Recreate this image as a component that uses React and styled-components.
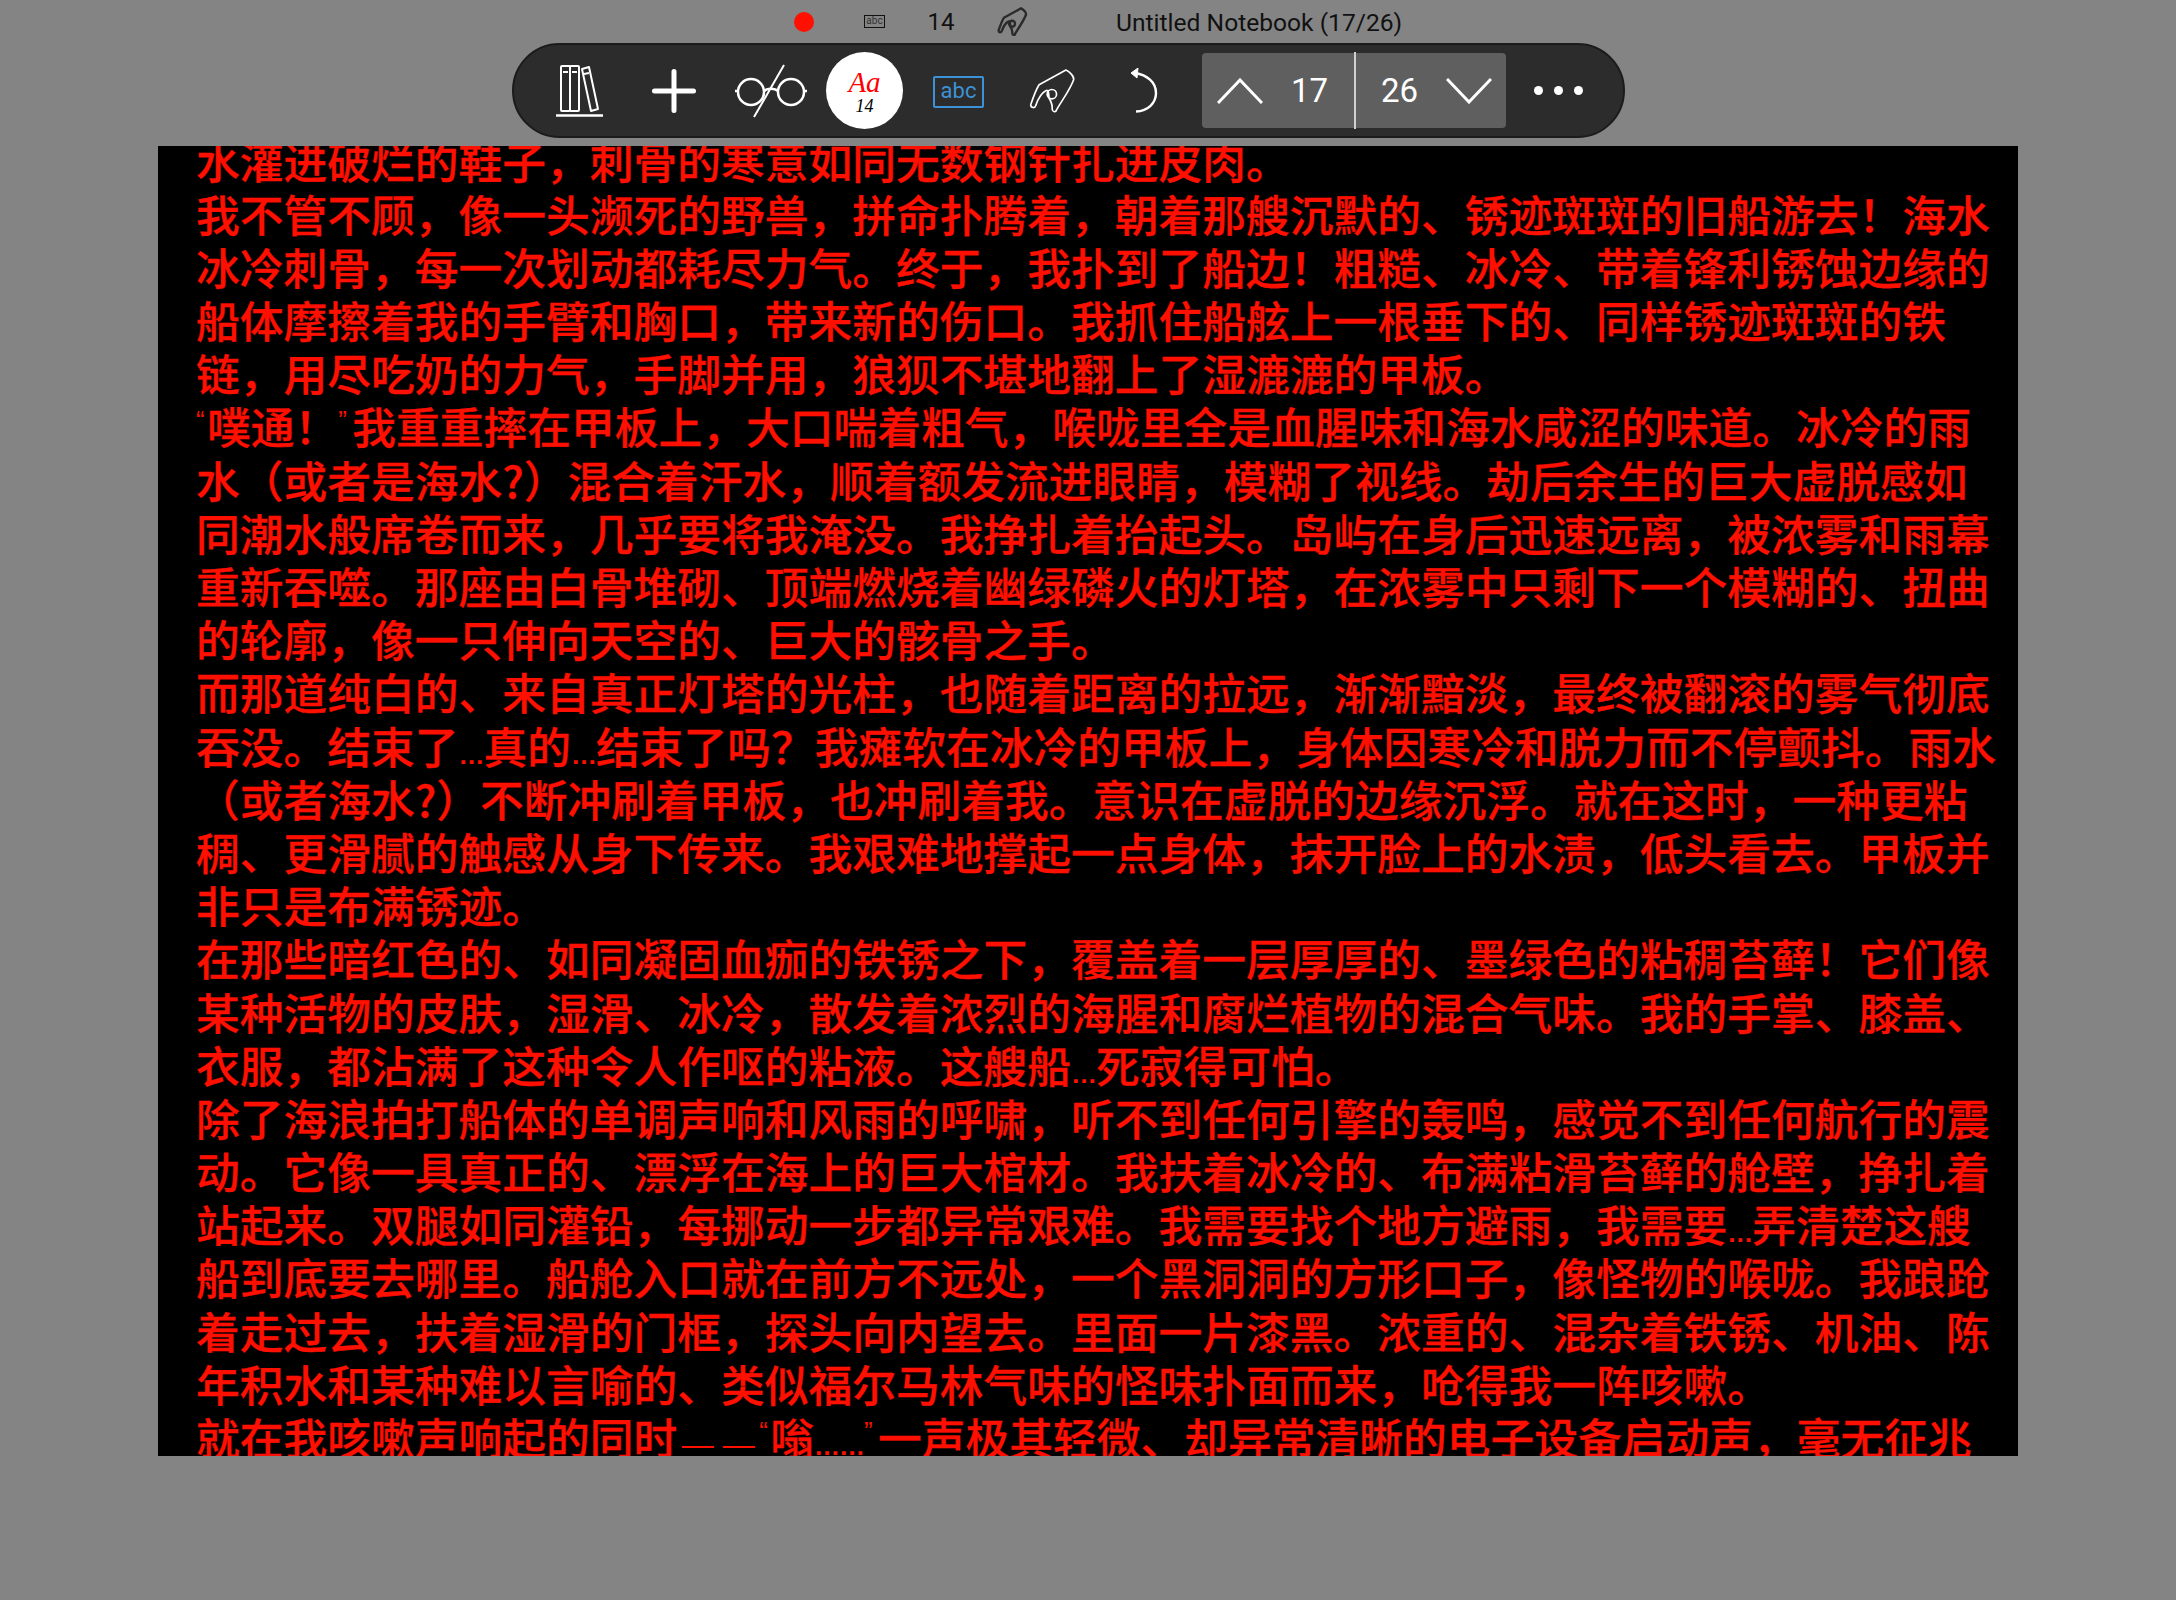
import styled, { createGlobalStyle } from "styled-components";

const GlobalStyle = createGlobalStyle`
  html, body {
    margin: 0;
    background: #848484;
  }
`;

const lines = [
  "水灌进破烂的鞋子，刺骨的寒意如同无数钢针扎进皮肉。",
  "我不管不顾，像一头濒死的野兽，拼命扑腾着，朝着那艘沉默的、锈迹斑斑的旧船游去！海水",
  "冰冷刺骨，每一次划动都耗尽力气。终于，我扑到了船边！粗糙、冰冷、带着锋利锈蚀边缘的",
  "船体摩擦着我的手臂和胸口，带来新的伤口。我抓住船舷上一根垂下的、同样锈迹斑斑的铁",
  "链，用尽吃奶的力气，手脚并用，狼狈不堪地翻上了湿漉漉的甲板。",
  "“噗通！”我重重摔在甲板上，大口喘着粗气，喉咙里全是血腥味和海水咸涩的味道。冰冷的雨",
  "水（或者是海水?）混合着汗水，顺着额发流进眼睛，模糊了视线。劫后余生的巨大虚脱感如",
  "同潮水般席卷而来，几乎要将我淹没。我挣扎着抬起头。岛屿在身后迅速远离，被浓雾和雨幕",
  "重新吞噬。那座由白骨堆砌、顶端燃烧着幽绿磷火的灯塔，在浓雾中只剩下一个模糊的、扭曲",
  "的轮廓，像一只伸向天空的、巨大的骸骨之手。",
  "而那道纯白的、来自真正灯塔的光柱，也随着距离的拉远，渐渐黯淡，最终被翻滚的雾气彻底",
  "吞没。结束了…真的…结束了吗？我瘫软在冰冷的甲板上，身体因寒冷和脱力而不停颤抖。雨水",
  "（或者海水?）不断冲刷着甲板，也冲刷着我。意识在虚脱的边缘沉浮。就在这时，一种更粘",
  "稠、更滑腻的触感从身下传来。我艰难地撑起一点身体，抹开脸上的水渍，低头看去。甲板并",
  "非只是布满锈迹。",
  "在那些暗红色的、如同凝固血痂的铁锈之下，覆盖着一层厚厚的、墨绿色的粘稠苔藓！它们像",
  "某种活物的皮肤，湿滑、冰冷，散发着浓烈的海腥和腐烂植物的混合气味。我的手掌、膝盖、",
  "衣服，都沾满了这种令人作呕的粘液。这艘船…死寂得可怕。",
  "除了海浪拍打船体的单调声响和风雨的呼啸，听不到任何引擎的轰鸣，感觉不到任何航行的震",
  "动。它像一具真正的、漂浮在海上的巨大棺材。我扶着冰冷的、布满粘滑苔藓的舱壁，挣扎着",
  "站起来。双腿如同灌铅，每挪动一步都异常艰难。我需要找个地方避雨，我需要…弄清楚这艘",
  "船到底要去哪里。船舱入口就在前方不远处，一个黑洞洞的方形口子，像怪物的喉咙。我踉跄",
  "着走过去，扶着湿滑的门框，探头向内望去。里面一片漆黑。浓重的、混杂着铁锈、机油、陈",
  "年积水和某种难以言喻的、类似福尔马林气味的怪味扑面而来，呛得我一阵咳嗽。",
  "就在我咳嗽声响起的同时——“嗡……”一声极其轻微、却异常清晰的电子设备启动声，毫无征兆",
];

const Page = styled.div`
  width: 2176px;
  height: 1600px;
  overflow: hidden;
  background: #848484;
  font-family: "Roboto", "Liberation Sans", sans-serif;
`;

const StatusRow = styled.div`
  display: flex;
  align-items: center;
  height: 43px;
  padding-left: 794px;
  color: #111;
`;

const RecordDot = styled.span`
  width: 20px;
  height: 20px;
  border-radius: 50%;
  background: #ff1000;
`;

const MiniAbc = styled.span`
  box-sizing: border-box;
  width: 21px;
  height: 13px;
  margin-left: 50px;
  border: 1px solid #111;
  font-size: 10px;
  line-height: 10px;
  text-align: center;
  color: #333;
`;

const StatusNumber = styled.span`
  margin-left: 41px;
  width: 30px;
  text-align: center;
  font-size: 24px;
`;

const MiniPen = styled.svg`
  margin-left: 41px;
  width: 31px;
  height: 29px;
`;

const NotebookTitle = styled.span`
  margin: 1px 0 0 88px;
  font-size: 24.6px;
  white-space: nowrap;
`;

const Toolbar = styled.div`
  box-sizing: border-box;
  display: flex;
  align-items: center;
  width: 1113px;
  height: 95px;
  margin-left: 512px;
  padding-left: 42px;
  border: 2px solid #1b1b1b;
  border-radius: 48px;
  background: #2c2c2c;
`;

const ToolIcon = styled.svg`
  flex: none;
  margin-left: ${(p) => p.$gap}px;
  width: ${(p) => p.$w}px;
  height: ${(p) => p.$h}px;
  color: #fff;
`;

const FontButton = styled.div`
  flex: none;
  display: flex;
  flex-direction: column;
  align-items: center;
  width: 77px;
  height: 77px;
  margin-left: 19px;
  border-radius: 50%;
  background: #fff;
  font-family: "Liberation Serif", serif;
  font-style: italic;
`;

const FontSample = styled.span`
  margin-top: 17px;
  font-size: 29px;
  line-height: 27px;
  color: #f00;
`;

const FontSize = styled.span`
  font-size: 18px;
  line-height: 20px;
  color: #000;
`;

const AbcBox = styled.div`
  box-sizing: border-box;
  flex: none;
  width: 51px;
  height: 32px;
  margin: 3px 0 0 30px;
  border: 2px solid #3c92d6;
  border-radius: 2px;
  color: #3c92d6;
  font-size: 22px;
  line-height: 26px;
  text-align: center;
`;

const PagePicker = styled.div`
  flex: none;
  display: flex;
  width: 304px;
  height: 75px;
  margin-left: 44px;
  border-radius: 4px;
  background: #5f5f5f;
`;

const PageHalf = styled.div`
  box-sizing: border-box;
  display: flex;
  flex: none;
  width: 50%;
  align-items: center;
  gap: 28px;
  padding-left: 15px;
  color: #fff;
  font-size: 33px;

  & + & {
    padding-left: 25px;
    border-left: 2px solid #d0d0d0;
    margin-top: -1px;
    margin-bottom: -1px;
  }
`;

const MoreDots = styled.div`
  display: flex;
  gap: 11px;
  margin-left: 28px;

  span {
    width: 9px;
    height: 9px;
    border-radius: 50%;
    background: #fff;
  }
`;

const Sheet = styled.div`
  box-sizing: border-box;
  width: 1860px;
  height: 1310px;
  margin: 8px 0 0 158px;
  padding-left: 38px;
  overflow: hidden;
  background: #000;
`;

const SheetText = styled.div`
  margin-top: -12.5px;
  color: #ff0f00;
  font-family: "Noto Sans CJK SC", sans-serif;
  font-size: 43.75px;
  font-weight: 500;
  line-height: 53.2px;
  -webkit-text-stroke: 0.3px #ff0f00;
`;

const TextLine = styled.div`
  height: 53.2px;
  white-space: nowrap;
`;

const SmallMark = styled.span`
  display: inline-block;
  font-family: "Liberation Sans", sans-serif;
  font-weight: 400;
  line-height: 0;
  -webkit-text-stroke: 0;
`;

const Quote = styled(SmallMark)`
  width: ${(p) => p.$w}px;
  font-size: 26px;
  vertical-align: 15px;
`;

const Dots = styled(SmallMark)`
  width: 25px;
  font-size: 26px;
  font-weight: 700;
`;

const Dash = styled(SmallMark)`
  width: 41px;
  font-size: 32px;
  text-align: center;
`;

const LineText = ({ text }) =>
  text.split(/([“”…—])/).map((part, i) => {
    if (part === "“") return <Quote key={i} $w={11}>{part}</Quote>;
    if (part === "”") return <Quote key={i} $w={14}>{part}</Quote>;
    if (part === "…") return <Dots key={i}>{part}</Dots>;
    if (part === "—") return <Dash key={i}>{part}</Dash>;
    return part;
  });

const PenPaths = () => (
  <>
    <path d="M140 36 L60 80 C48 100 40 125 35 140 C36 150 48 150 50 142 C56 125 66 105 80 98 C90 92 88 110 90 120 C96 130 100 140 99 152 C100 162 110 163 112 155 C125 130 150 100 163 65 C165 55 150 40 140 36 Z" />
    <circle cx="98" cy="108" r="14" />
  </>
);

export default function App() {
  return (
    <Page>
      <GlobalStyle />
      <StatusRow>
        <RecordDot />
        <MiniAbc>abc</MiniAbc>
        <StatusNumber>14</StatusNumber>
        <MiniPen viewBox="30 30 140 135" fill="none" stroke="#2a2a2a" strokeWidth="11" strokeLinejoin="round">
          <PenPaths />
        </MiniPen>
        <NotebookTitle>Untitled Notebook (17/26)</NotebookTitle>
      </StatusRow>
      <Toolbar>
        <ToolIcon $gap={0} $w={47} $h={52} viewBox="0 0 47 52" fill="none" stroke="currentColor" strokeWidth="2">
          <rect x="5" y="1" width="9" height="45" rx="1" />
          <rect x="14" y="1" width="9" height="45" rx="1" />
          <path d="M26 4 L33 2 L42 44 L35 46 Z" strokeLinejoin="round" />
          <path d="M7 7 H12 M16 7 H21 M28 9 L33 8" />
          <path d="M0 50.5 H47" strokeWidth="2.5" />
        </ToolIcon>
        <ToolIcon $gap={49} $w={44} $h={44} viewBox="0 0 44 44" stroke="currentColor" strokeWidth="5" strokeLinecap="round">
          <path d="M22 2.5 V41.5 M2.5 22 H41.5" />
        </ToolIcon>
        <ToolIcon $gap={39} $w={72} $h={54} viewBox="0 0 72 54" fill="none" stroke="currentColor" strokeWidth="2.5">
          <circle cx="16" cy="28" r="13" />
          <circle cx="56" cy="28" r="13" />
          <path d="M0 27 H3 M69 27 H72 M29 27 C32 24 40 24 43 27" />
          <path d="M49 1 L19 53" strokeWidth="2" />
        </ToolIcon>
        <FontButton>
          <FontSample>Aa</FontSample>
          <FontSize>14</FontSize>
        </FontButton>
        <AbcBox>abc</AbcBox>
        <ToolIcon $gap={45} $w={47} $h={46} viewBox="30 30 140 137" fill="none" stroke="currentColor" strokeWidth="5" strokeLinejoin="round">
          <PenPaths />
        </ToolIcon>
        <ToolIcon $gap={55} $w={27} $h={45} viewBox="0 0 27 45" fill="none" stroke="currentColor" strokeWidth="2.4">
          <path d="M4 5 C16 7 25 14 25 25 C25 35 17 43 5 43.5" />
          <path d="M0 5 L7 0 L6 10 Z" fill="currentColor" strokeWidth="1" />
        </ToolIcon>
        <PagePicker>
          <PageHalf>
            <ToolIcon $gap={0} $w={46} $h={26} viewBox="0 0 46 26" fill="none" stroke="currentColor" strokeWidth="3">
              <path d="M1 25 L23 2 L45 25" />
            </ToolIcon>
            <span>17</span>
          </PageHalf>
          <PageHalf>
            <span>26</span>
            <ToolIcon $gap={0} $w={46} $h={26} viewBox="0 0 46 26" fill="none" stroke="currentColor" strokeWidth="3">
              <path d="M1 1 L23 24 L45 1" />
            </ToolIcon>
          </PageHalf>
        </PagePicker>
        <MoreDots>
          <span />
          <span />
          <span />
        </MoreDots>
      </Toolbar>
      <Sheet>
        <SheetText>
          {lines.map((line, i) => (
            <TextLine key={i}>
              <LineText text={line} />
            </TextLine>
          ))}
        </SheetText>
      </Sheet>
    </Page>
  );
}
